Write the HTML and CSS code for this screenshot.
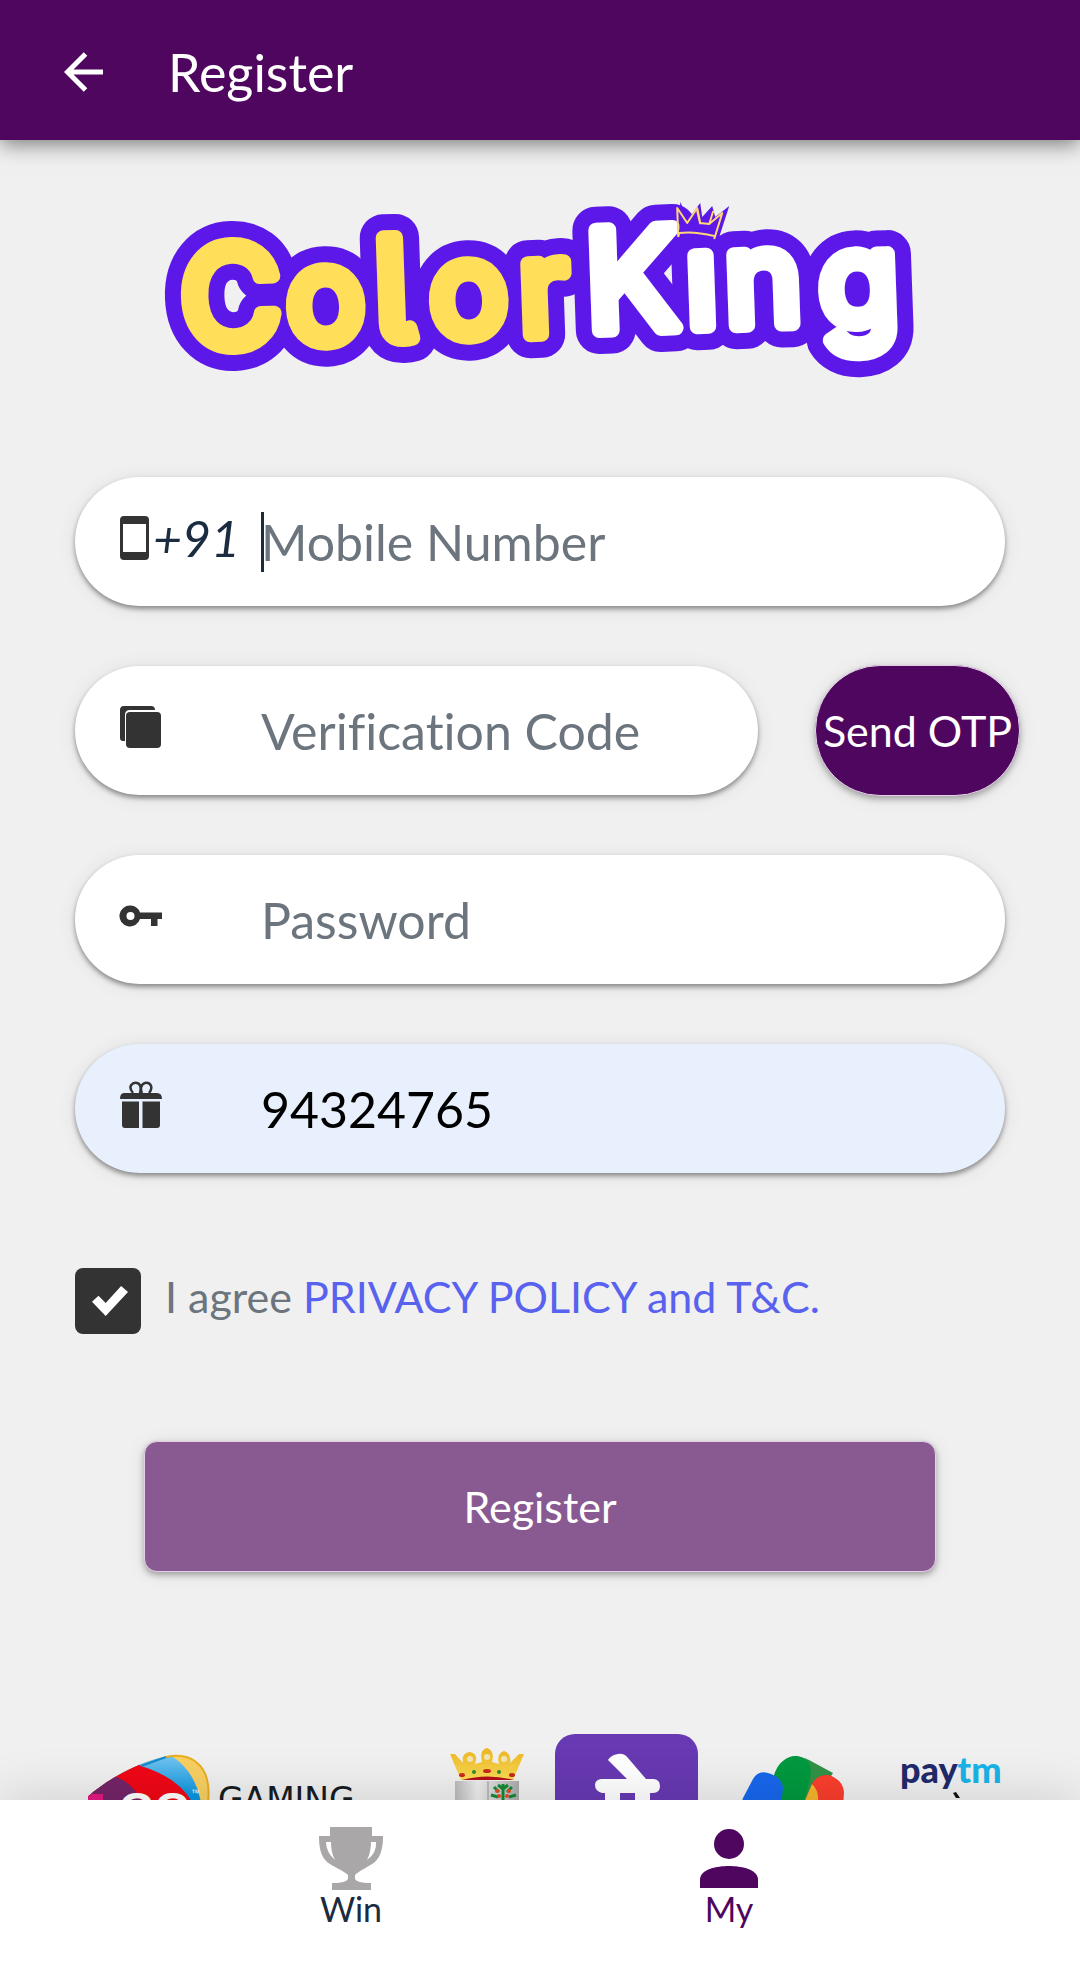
FILE: index.html
```html
<!DOCTYPE html>
<html lang="en">
<head>
<meta charset="utf-8">
<meta name="viewport" content="width=device-width, initial-scale=1">
<title>Register</title>
<link rel="stylesheet" href="styles.css">
</head>
<body>
<div class="app">
  <header class="topbar">
    <button class="back" type="button" aria-label="Back">
      <svg width="40" height="40" viewBox="0 0 40 40"><path d="M21.500 2 3.500 20 21.500 38M4 20H39" fill="none" stroke="#fff" stroke-width="5"/></svg>
    </button>
    <h1 class="title">Register</h1>
  </header>

  <main class="content">
    <svg class="brand" viewBox="160 195 760 190" role="img" aria-label="ColorKing">
      <defs>
        <g id="word-color"><text rotate="-2" x="182 288 376 431 520" y="348 343 340 337 335"><tspan class="cap">C</tspan>o<tspan class="tall">l</tspan>or</text></g>
        <g id="word-king"><text rotate="-2" x="587 687 726 820" y="331 327 326 327"><tspan class="cap">K</tspan>ıng</text></g>
      </defs>
      <g class="brand-outline"><use href="#word-color"/><use href="#word-king"/></g>
      <use class="brand-color" href="#word-color"/>
      <use class="brand-king" href="#word-king"/>
      <path d="M680 202 688 219 700 203 702 217 712 206 715 217 729 206 719 237 679 233Z" fill="#5b18e8"/>
      <path d="M678 237 677 208 687 223 697 208 700 223 709 224 722 213 714 239M678 237 679 233Q694 231 714 236M700 224 697 211M709 224 713 211" fill="none" stroke="#ffd576" stroke-width="2"/>
    </svg>

    <form class="form">
      <div class="field">
        <label class="lead" for="mobile" aria-label="Mobile number">
          <svg class="icon" width="32" height="46" viewBox="0 0 32 46"><path fill="#333" fill-rule="evenodd" d="M5 1H26Q30 1 30 5V41Q30 45 26 45H5Q1 45 1 41V5Q1 1 5 1ZM4 9V37H27V9Z"/></svg>
          <em class="code">+91</em>
        </label>
        <span class="caret"></span>
        <input class="input" id="mobile" type="tel" placeholder="Mobile Number">
      </div>

      <div class="otp-row">
        <div class="field">
          <label class="lead" for="otp" aria-label="Verification code">
            <svg class="icon" width="44" height="44" viewBox="0 0 44 44"><path d="M4 36Q1 36 1 33V5Q1 1 5 1H32Q36 1 36 5H11Q6 5 6 10V36Z" fill="#333"/><rect x="7" y="7" width="35" height="36" rx="4" fill="#333"/></svg>
          </label>
          <input class="input" id="otp" type="text" placeholder="Verification Code">
        </div>
        <button class="btn btn-otp" type="button">Send OTP</button>
      </div>

      <div class="field">
        <label class="lead" for="password" aria-label="Password">
          <svg class="icon" width="44" height="22" viewBox="0 0 44 22"><path fill="#333" fill-rule="evenodd" d="M11.500 0.500A10.500 10.500 0 0 1 21 7.500H43V14H38.500V21H32V14H21A10.500 10.500 0 1 1 11.500 .5ZM11.500 7A4 4 0 1 0 11.500 15A4 4 0 1 0 11.500 7Z"/></svg>
        </label>
        <input class="input" id="password" type="password" placeholder="Password">
      </div>

      <div class="field field-filled">
        <label class="lead" for="invite" aria-label="Invitation code">
          <svg class="icon" width="44" height="48" viewBox="0 0 44 48"><g fill="#333"><path d="M5 12H38Q43 12 43 18H1Q1 12 5 12Z"/><path d="M3 20.500H20V47H6Q3 47 3 44ZM23.500 20.500H41V44Q41 47 38 47H23.500Z"/></g><path d="M14 12C8 5 14 1 18 2 22 3 22 8 21 12M23 12C21 8 22 3 26 2 31 1 35 6 30 12" fill="none" stroke="#333" stroke-width="2.500"/></svg>
        </label>
        <input class="input" id="invite" type="text" value="94324765">
      </div>

      <div class="agree">
        <input class="check" id="agree" type="checkbox" checked>
        <label for="agree">I agree <a href="#privacy">PRIVACY POLICY and T&amp;C.</a></label>
      </div>

      <button class="btn btn-submit" type="submit">Register</button>
    </form>

    <div class="partners">
      <svg width="332" height="90" viewBox="88 1737 332 90" role="img" aria-label="Gaming">
        <defs><clipPath id="swoosh"><path d="M82 1805C106 1781 151 1758 180 1758 202 1760 214 1780 207 1827H82Z"/></clipPath>
        <linearGradient id="sky" x1="0" y1="0" x2="0" y2="1"><stop offset="0" stop-color="#8ed0f4"/><stop offset=".6" stop-color="#0b95e0"/></linearGradient></defs>
        <g clip-path="url(#swoosh)">
          <path d="M80 1750H215V1830H80Z" fill="#f8cf62"/>
          <path d="M80 1750H155C185 1764 201 1780 204 1830H80Z" fill="url(#sky)"/>
          <path d="M80 1750H120L141 1769C165 1776 187 1790 195 1812V1830H80Z" fill="#f00716"/>
          <path d="M80 1765 117 1780C134 1788 142 1798 148 1830H80Z" fill="#752468"/>
          <path d="M80 1797H103V1830H80Z" fill="#e51982"/>
        </g>
        <path d="M166 1760C185 1756 213 1762 208 1806" fill="none" stroke="#e8ae20" stroke-width="2"/>
        <path d="M141 1769 166 1760" stroke="#1688ca" stroke-width="2"/>
        <text class="gg" x="119" y="1828">GG</text>
        <text class="tm" x="191" y="1799">™</text>
        <text class="gaming" x="218" y="1814">GAMING</text>
      </svg>

      <svg width="75" height="90" viewBox="450 1737 75 90">
        <defs><linearGradient id="silver"><stop offset="0" stop-color="#bbb"/><stop offset=".35" stop-color="#eee"/><stop offset=".7" stop-color="#ccc"/><stop offset="1" stop-color="#aaa"/></linearGradient>
        <linearGradient id="gold" x1="0" y1="0" x2="0" y2="1"><stop offset="0" stop-color="#ecb422"/><stop offset="1" stop-color="#fbdc55"/></linearGradient></defs>
        <path d="M455 1784H519V1827H455Z" fill="url(#silver)"/><path d="M488 1784V1827" stroke="#999"/>
        <path d="M450 1757 455 1757 463 1766Q461 1756 470 1755 479 1757 475 1767L482 1765Q479 1753 487 1751 495 1754 492 1765L499 1767Q496 1757 504 1754 512 1757 510 1766L519 1757H524L513 1783H461Z" fill="url(#gold)"/>
        <g fill="#f2e5b5"><circle cx="470" cy="1762" r="3"/><circle cx="487" cy="1760" r="3"/><circle cx="504" cy="1762" r="3"/></g>
        <path d="M462 1783Q487 1776 514 1783Z" fill="#b40f16"/>
        <g fill="#cb2a1b"><ellipse cx="462" cy="1778" rx="3" ry="2"/><ellipse cx="487" cy="1774" rx="4" ry="2"/><ellipse cx="512" cy="1778" rx="3" ry="2"/></g>
        <g fill="#2b9130"><circle cx="474" cy="1775" r="2"/><circle cx="499" cy="1775" r="2"/></g>
        <path d="M503 1787V1804M494 1790 499 1795M512 1790 507 1795M491 1798 498 1800M516 1798 509 1800M498 1788 503 1792 508 1788" fill="none" stroke="#148a36" stroke-width="3"/>
        <g fill="#e94b24"><circle cx="497" cy="1794" r="2"/><circle cx="509" cy="1794" r="2"/><circle cx="499" cy="1799" r="2"/><circle cx="507" cy="1799" r="2"/></g>
      </svg>

      <svg width="143" height="90" viewBox="555 1737 143 90">
        <rect x="555" y="1737" width="143" height="143" rx="20" fill="#6739b2"/>
        <path d="M608 1763Q611 1758 618 1757 624 1756 628 1761L646 1782H654Q660 1783 660 1789 660 1796 653 1796H650V1827H635V1796H620V1827H605V1796H602Q595 1794 595 1788 595 1783 601 1782H627Z" fill="#fff"/>
      </svg>

      <svg width="130" height="90" viewBox="728 1737 130 90">
        <path d="M790 1760Q799 1758 809 1763L833 1776 812 1810H775Z" fill="#319247"/>
        <path d="M774 1778C780 1759 799 1753 809 1766 814 1776 807 1789 803 1810H770Z" fill="#00993f"/>
        <path d="M743 1801 753 1782Q758 1773 768 1776 782 1780 783 1791L779 1827H735Z" fill="#1767ec"/>
        <path d="M812 1787Q817 1777 829 1778 843 1783 844 1795L842 1827H809Z" fill="#fb3e2d"/>
        <path d="M812 1787Q819 1794 818 1803V1827H795Z" fill="#f5b52e"/>
      </svg>

      <svg width="114" height="90" viewBox="888 1737 114 90" role="img" aria-label="Paytm">
        <text class="paytm" x="900" y="1786">pay<tspan>tm</tspan></text>
        <path d="M953 1796 956 1795 960 1801H956Z" fill="#111"/>
      </svg>
    </div>
  </main>

  <nav class="tabs">
    <a class="tab" href="#win">
      <svg width="66" height="66" viewBox="0 0 66 66"><path fill="#a9a7a8" fill-rule="evenodd" d="M12 1H54V10H65C65 29 59 35 54 38 48 42 41 45 37 49V52Q37 57 53 57V64H14V57Q30 57 30 52V49C26 45 18 42 12 38 6 34 1 28 1 10H12ZM8 16Q8 26 17 34 13 27 13 16ZM53 16Q53 26 49 34 59 27 58 16Z"/></svg>
      <span>Win</span>
    </a>
    <a class="tab tab-active" href="#my" aria-current="page">
      <svg width="66" height="66" viewBox="0 0 66 66"><g fill="#4f065f"><circle cx="33" cy="18" r="15"/><path d="M4 62V53C5 43 21 40 33 40S61 43 62 53V62Z"/></g></svg>
      <span>My</span>
    </a>
  </nav>
</div>
</body>
</html>
```
FILE: styles.css
```css
* { box-sizing: border-box; }

body {
  margin: 0;
  background: #f0f0f0;
  color: #1b2b40;
  font-family: Lato, "Noto Sans", sans-serif;
  font-variant-ligatures: no-common-ligatures;
}

button, input {
  font-family: inherit;
  font-variant-ligatures: inherit;
}

.app {
  display: flex;
  flex-direction: column;
  height: 100vh;
}

.topbar {
  display: flex;
  flex: none;
  align-items: center;
  gap: 64px;
  height: 140px;
  padding: 4px 64px 0;
  background: #4f065f;
  color: #fff;
  box-shadow: 0 4px 20px rgba(0, 0, 0, .5);
  z-index: 1;
}

.back {
  display: flex;
  padding: 0;
  border: 0;
  background: none;
}

.title {
  margin: 0;
  font-size: 52px;
  font-weight: 400;
  line-height: 60px;
}

.content {
  flex: 1;
  min-height: 0;
  overflow-y: auto;
  scrollbar-width: none;
  padding-top: 55px;
}

.brand {
  display: block;
  width: 70.4%;
  margin: 0 auto 92px;
  font-family: Inter, sans-serif;
  font-size: 130px;
  font-weight: 400;
  font-feature-settings: "cv05";
  stroke-linejoin: round;
}
.cap { font-size: 138px; }
.tall { font-size: 140px; }
.brand-outline { fill: #5b18e8; stroke: #5b18e8; stroke-width: 47px; }
.brand-color { fill: #ffde59; stroke: #ffde59; stroke-width: 15px; }
.brand-king { fill: #fff; stroke: #fff; stroke-width: 15px; }

.form {
  display: flex;
  flex-direction: column;
  gap: 60px;
  padding: 0 75px;
}

.field {
  display: flex;
  flex: 1;
  align-items: center;
  min-width: 0;
  height: 129px;
  padding: 0 43px;
  border-radius: 65px;
  background: #fff;
  box-shadow: 0 3px 5px rgba(0, 0, 0, .4), 0 2px 20px rgba(0, 0, 0, .08);
}
.form > .field { flex: none; }
.field-filled { background: #e8f0fe; }

.lead {
  display: flex;
  flex: none;
  align-items: center;
  gap: 2px;
  width: 143px;
  padding-bottom: 8px;
}
.icon { display: block; margin-left: 1px; }
.code { font-size: 50px; line-height: 60px; }

.caret {
  width: 3px;
  height: 60px;
  margin: 0 -3px 0 0;
  background: #1b2b40;
}

.input {
  flex: 1;
  min-width: 0;
  height: 72px;
  padding: 0;
  border: 0;
  outline: 0;
  background: none;
  color: #000;
  font-size: 50px;
}
.input::placeholder { color: #6c757d; opacity: 1; }

.otp-row {
  display: flex;
  align-items: center;
  gap: 57px;
  height: 129px;
  margin-right: -15px;
}

.btn {
  height: 131px;
  padding: 0;
  border: 1px solid #e4cfe8;
  background: #4f065f;
  color: #fff;
  font-size: 43px;
  box-shadow: 0 3px 6px rgba(0, 0, 0, .3), 0 2px 20px rgba(0, 0, 0, .08);
}
.btn-otp {
  flex: none;
  width: 205px;
  border-radius: 65px;
  white-space: nowrap;
}
.btn-submit {
  margin: 46px 69px 0;
  border-radius: 13px;
  background: #895a92;
}

.agree {
  display: flex;
  align-items: center;
  gap: 24px;
  margin-top: 34px;
  color: #6c757d;
  font-size: 43px;
  line-height: 60px;
}
.agree label { padding-bottom: 8px; }
.agree a { color: #5862ee; text-decoration: none; }

.check {
  appearance: none;
  display: grid;
  place-items: center;
  width: 66px;
  height: 66px;
  margin: 0;
  padding-left: 4px;
  border-radius: 8px;
  background: #333;
}
.check::before {
  content: "";
  width: 36px;
  height: 30px;
  background: #fff;
  clip-path: polygon(0 52%, 18% 32%, 38% 56%, 81% 0, 100% 20%, 38% 100%);
}

.partners {
  display: flex;
  justify-content: space-between;
  padding: 162px 78px 120px 88px;
}
.partners svg { flex: none; }
.gg { fill: #fff; font: 700 46px "Liberation Sans", sans-serif; }
.tm { fill: #fff; font: 9px "Liberation Sans", sans-serif; }
.gaming { fill: #161c22; font: 33px "DejaVu Sans", sans-serif; }
.paytm { fill: #20296b; font-size: 36px; font-weight: 900; }
.paytm tspan { fill: #19b3e8; }

.tabs {
  display: flex;
  flex: none;
  height: 166px;
  padding: 0 15%;
  background: #fff;
  box-shadow: 0 -2px 50px rgba(0, 0, 0, .14);
  z-index: 1;
}
.tab {
  display: flex;
  flex: 1;
  flex-direction: column;
  align-items: center;
  padding-top: 26px;
  color: #1b2b40;
  font-size: 34px;
  line-height: 34px;
  text-decoration: none;
}
.tab-active { color: #4f065f; }
```
